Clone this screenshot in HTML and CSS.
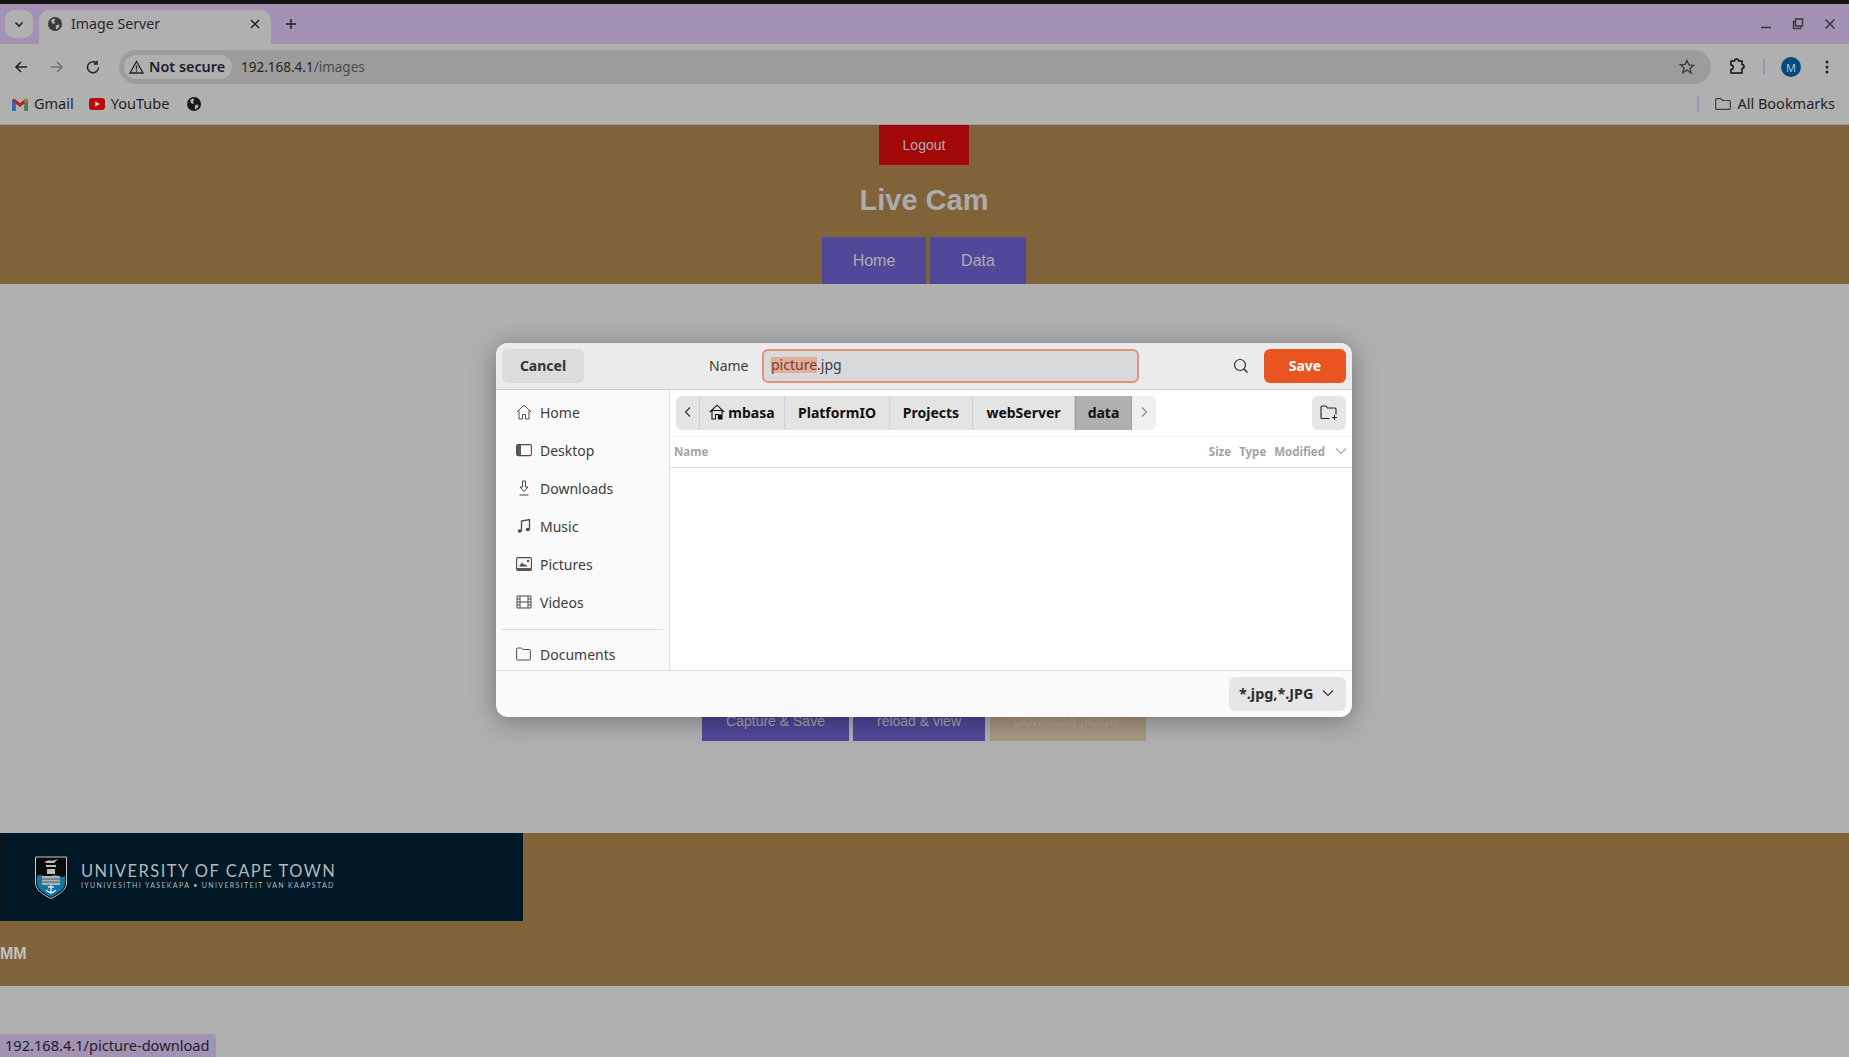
FILE: index.html
```html
<!DOCTYPE html>
<html lang="en">
<head>
<meta charset="utf-8">
<title>Image Server</title>
<link rel="stylesheet" href="styles.css">
</head>
<body>
<div class="chrome">
  <div class="tabstrip">
    <div class="tabsearch"><svg width="12" height="12" viewBox="0 0 12 12"><path d="M2.500 4.500 6 8l3.500-3.500" fill="none" stroke="#222" stroke-width="1.600"/></svg></div>
    <div class="tab">
      <svg class="tabglobe" width="14" height="14" viewBox="0 0 14 14"><circle cx="7" cy="7" r="7" fill="#3a3a3a"/><path d="M3 3l3-1.500 1.500 1L6 4.500l1 1.500-1 1-2-1zM8.500 8l3-.5-.5 3-2.500 2-1-2.500z" fill="#b0b0b0"/></svg>
      <span class="tabtitle">Image Server</span>
      <svg width="10" height="10" viewBox="0 0 10 10"><path d="M1 1l8 8M9 1l-8 8" stroke="#222" stroke-width="1.500"/></svg>
    </div>
    <svg class="newtab" width="12" height="12" viewBox="0 0 12 12"><path d="M6 1v10M1 6h10" stroke="#222" stroke-width="1.500"/></svg>
    <div class="winctl">
      <svg width="12" height="12" viewBox="0 0 12 12"><path d="M1 9.500h10" stroke="#3c3c3c" stroke-width="1.600"/></svg>
      <svg width="12" height="12" viewBox="0 0 12 12"><path d="M3.500 3.500H1.500v7h7v-2M3.500 1v7h7V1z" fill="none" stroke="#3c3c3c" stroke-width="1.500"/></svg>
      <svg width="12" height="12" viewBox="0 0 12 12"><path d="M1.500 1.500l9 9M10.500 1.500l-9 9" stroke="#3c3c3c" stroke-width="1.600"/></svg>
    </div>
  </div>
  <div class="toolbar">
    <svg class="navicon" width="14" height="14" viewBox="0 0 14 14"><path d="M13 7H2M7 2L2 7l5 5" fill="none" stroke="#222" stroke-width="1.500"/></svg>
    <svg class="navicon" width="14" height="14" viewBox="0 0 14 14"><path d="M1 7h11M7 2l5 5-5 5" fill="none" stroke="#717171" stroke-width="1.500"/></svg>
    <svg class="navicon" width="14" height="14" viewBox="0 0 14 14"><path d="M12.500 7.500A5.500 5.500 0 1 1 10.500 3M11 .8V4H7.800" fill="none" stroke="#222" stroke-width="1.500"/></svg>
    <div class="omnibox">
      <div class="chip">
        <svg width="15" height="14" viewBox="0 0 15 14"><path d="M7.500 1.500 14 13H1zM7.500 5.500v4M7.500 10.500v1.200" fill="none" stroke="#222" stroke-width="1.300"/></svg>
        <span>Not secure</span>
      </div>
      <span class="url">192.168.4.1<span class="urlpath">/images</span></span>
      <svg class="star" width="16" height="16" viewBox="0 0 16 16"><path d="M8 1.500l1.900 4.400 4.700.4-3.600 3.100 1.100 4.700L8 11.100l-4.100 2.500 1.100-4.700-3.600-3.100 4.700-.4z" fill="none" stroke="#3c3c3c" stroke-width="1.300"/></svg>
    </div>
    <svg class="ext" width="18" height="18" viewBox="0 0 18 18"><path d="M2 3h3.500a2 2 0 0 1 4 0H13v3.500a2 2 0 0 1 0 4V15H2v-3.500a2.200 2.200 0 0 0 0-4.500z" fill="none" stroke="#111" stroke-width="1.500"/></svg>
    <div class="vsep"></div>
    <div class="avatar">M</div>
    <svg class="dots" width="4" height="14" viewBox="0 0 4 14"><circle cx="2" cy="2" r="1.500" fill="#222"/><circle cx="2" cy="7" r="1.500" fill="#222"/><circle cx="2" cy="12" r="1.500" fill="#222"/></svg>
  </div>
  <div class="bookmarks">
    <svg width="16" height="13" viewBox="0 0 16 13"><path d="M0 2v11h3.500V5.500L8 9l4.500-3.500V13H16V2l-2-1.500L8 5 2 .5z" fill="#b3261e"/><path d="M0 2v11h3.500V5.500z" fill="#2b6cb0"/><path d="M12.500 5.500V13H16V2z" fill="#2e8b57"/><path d="M14 .5 16 2l-3.500 3.500V3z" fill="#b58a10"/></svg>
    <span class="bm">Gmail</span>
    <svg class="yt" width="16" height="12" viewBox="0 0 16 12"><rect width="16" height="12" rx="3" fill="#b50c0c"/><path d="M6.300 3.500v5l4.400-2.500z" fill="#d8d8d8"/></svg>
    <span class="bm">YouTube</span>
    <svg class="bmglobe" width="14" height="14" viewBox="0 0 14 14"><circle cx="7" cy="7" r="7" fill="#161616"/><path d="M3 3l3-1.500 1.500 1L6 4.500l1 1.500-1 1-2-1zM8.500 8l3-.5-.5 3-2.500 2-1-2.500z" fill="#b0b0b0"/></svg>
    <div class="bmspace"></div>
    <div class="vsep"></div>
    <svg class="bmfolder" width="16" height="12" viewBox="0 0 16 12"><path d="M.7 10.300V1.700q0-1 1-1H6l1.500 1.800h6.800q1 0 1 1v6.800q0 1-1 1H1.700q-1 0-1-1z" fill="none" stroke="#3c3c3c" stroke-width="1.200"/></svg>
    <span class="bm">All Bookmarks</span>
  </div>
</div>

<div class="page">
  <header class="site-head">
    <a class="btn logout">Logout</a>
    <h1>Live Cam</h1>
    <nav class="site-nav">
      <a class="btn nav home">Home</a>
      <a class="btn nav data">Data</a>
    </nav>
  </header>
  <main class="site-main">
    <div class="actions">
      <a class="btn act capture">Capture &amp; Save</a>
      <a class="btn act reload">reload &amp; view</a>
      <a class="btn act download">Download picture</a>
    </div>
  </main>
  <footer class="site-foot">
    <div class="uct">
      <svg class="crest" width="32" height="43" viewBox="0 0 32 43">
        <path d="M.5 1h31v26c0 7-8 12-15.500 15.500C8.500 39 .5 34 .5 27z" fill="#0b0b0b" stroke="#c9c9c9" stroke-width="1"/>
        <path d="M2 20q3.500-2 7 0t7 0 7 0 7 0v7c0 6-7 10.500-14 14C9 37.500 2 33 2 27z" fill="#0f76a5"/>
        <path d="M9 6q6-3 8-1l6-2-4 4h-7zM11 9h10v2H11zM12 13h8v5h-8z" fill="#bdbdbd"/>
        <rect x="7" y="20" width="18" height="9" fill="#a9b4b8"/>
        <path d="M7 23h18M7 26h18" stroke="#555" stroke-width="1"/>
        <path d="M16 29v9M11 34q5 5 10 0M13 31h6" fill="none" stroke="#e2e2e2" stroke-width="1.300"/>
      </svg>
      <div class="uct-text">
        <div class="uct-name">UNIVERSITY OF CAPE TOWN</div>
        <div class="uct-sub">IYUNIVESITHI YASEKAPA • UNIVERSITEIT VAN KAAPSTAD</div>
      </div>
    </div>
    <div class="mm">MM</div>
  </footer>
</div>

<div class="status">192.168.4.1/picture-download</div>

<div class="dialog">
  <div class="dlg-head">
    <button class="dbtn cancel">Cancel</button>
    <label class="name-label">Name</label>
    <div class="name-input"><span class="sel">picture</span>.jpg</div>
    <svg class="search" width="16" height="16" viewBox="0 0 16 16"><circle cx="7" cy="7" r="5.500" fill="none" stroke="#2e2e2e" stroke-width="1.200"/><path d="M11 11l3.500 3.500" stroke="#2e2e2e" stroke-width="1.500"/></svg>
    <button class="dbtn save">Save</button>
  </div>
  <div class="dlg-body">
    <aside class="places">
      <div class="place"><svg width="16" height="16" viewBox="0 0 16 16"><path d="M.8 8 8 1.200 15.200 8M3 6.500V15h3.500v-4.500h3V15H13V6.500" fill="none" stroke="#4a4a4a" stroke-width="1"/></svg>Home</div>
      <div class="place"><svg width="16" height="16" viewBox="0 0 16 16"><rect x=".6" y="2.600" width="14.800" height="11" rx="1.500" fill="none" stroke="#4a4a4a" stroke-width="1.100"/><path d="M1 3h4v10H1z" fill="#5a5a5a"/></svg>Desktop</div>
      <div class="place"><svg width="16" height="16" viewBox="0 0 16 16"><path d="M6.500 1h3v6h2.500L8 11.500 4 7h2.500zM3.500 15h9" fill="none" stroke="#4a4a4a" stroke-width="1"/></svg>Downloads</div>
      <div class="place"><svg width="16" height="16" viewBox="0 0 16 16"><path d="M5.500 13V3l8-1.500V11" fill="none" stroke="#4a4a4a" stroke-width="1.300"/><ellipse cx="3.700" cy="13" rx="2" ry="1.700" fill="#4a4a4a"/><ellipse cx="11.800" cy="11.500" rx="2" ry="1.700" fill="#4a4a4a"/></svg>Music</div>
      <div class="place"><svg width="16" height="16" viewBox="0 0 16 16"><rect x=".6" y="1.600" width="14.800" height="12.800" rx="1.500" fill="none" stroke="#4a4a4a" stroke-width="1.100"/><path d="M1 12h14v2.500H1z" fill="#5a5a5a"/><path d="M3 10.500l3-4 2.200 2.500 1-1 2.300 2.500z" fill="#4a4a4a"/><circle cx="12" cy="5" r="1.200" fill="#4a4a4a"/></svg>Pictures</div>
      <div class="place"><svg width="16" height="16" viewBox="0 0 16 16"><path d="M1 2h14v12H1zM4 2v12M12 2v12M1 5h3M1 8h14M1 11h3M12 5h3M12 11h3" fill="none" stroke="#4a4a4a" stroke-width="1"/></svg>Videos</div>
      <div class="place-sep"></div>
      <div class="place"><svg width="16" height="16" viewBox="0 0 16 16"><path d="M.6 3q0-1 1-1h4l1.300 1.500h6.500q1 0 1 1V13q0 1-1 1H1.600q-1 0-1-1z" fill="none" stroke="#4a4a4a" stroke-width="1"/></svg>Documents</div>
    </aside>
    <section class="files">
      <div class="pathrow">
        <div class="pathbar">
          <div class="seg arrow"><svg width="10" height="12" viewBox="0 0 10 12"><path d="M7 1.500 2.500 6 7 10.500" fill="none" stroke="#2e2e2e" stroke-width="1.100"/></svg></div>
          <div class="seg s-home"><svg width="16" height="16" viewBox="0 0 16 16"><path d="M.8 8 8 1.200 15.200 8M3 6.500V15h3.500v-4.500h3V15H13V6.500z" fill="none" stroke="#111" stroke-width="1.100"/><path d="M9.500 10.500h3.500V15H9.500z" fill="#111"/></svg>mbasa</div>
          <div class="seg s-plat">PlatformIO</div>
          <div class="seg s-proj">Projects</div>
          <div class="seg s-web">webServer</div>
          <div class="seg s-data">data</div>
          <div class="seg arrow next"><svg width="10" height="12" viewBox="0 0 10 12"><path d="M3 1.500 7.500 6 3 10.500" fill="none" stroke="#888" stroke-width="1.100"/></svg></div>
        </div>
        <div class="newfolder"><svg width="18" height="16" viewBox="0 0 18 16"><path d="M9.500 13.500H2q-1 0-1-1V2q0-1 1-1h4l1.500 2H15q1 0 1 1v5.500" fill="none" stroke="#222" stroke-width="1.100"/><path d="M12 12.500h5M14.500 10v5" stroke="#222" stroke-width="1"/></svg></div>
      </div>
      <div class="cols">
        <span class="col-name">Name</span>
        <span>Size</span>
        <span>Type</span>
        <span>Modified</span>
        <svg width="12" height="8" viewBox="0 0 12 8"><path d="M1 1.500l5 5 5-5" fill="none" stroke="#a8a8a8" stroke-width="1.100"/></svg>
      </div>
      <div class="filelist"></div>
    </section>
  </div>
  <div class="dlg-foot">
    <div class="filter">*.jpg,*.JPG<svg width="12" height="8" viewBox="0 0 12 8"><path d="M1 1.500l5 5 5-5" fill="none" stroke="#2e2e2e" stroke-width="1.100"/></svg></div>
  </div>
</div>
</body>
</html>
```

FILE: styles.css
```css
* { box-sizing: border-box; }
html, body { margin: 0; height: 100%; overflow: hidden; }
body {
  position: relative;
  background: #b0b0b0;
  font-family: "Noto Sans", "Open Sans", sans-serif;
  color: #1c1c1c;
}

/* browser chrome */
.chrome { background: #b0b0b0; border-bottom: 1px solid #9a9a9a; height: 125px; border-top: 4px solid #141414; }
.tabstrip { display: flex; align-items: center; height: 40px; background: #a392b3; padding: 6px 0 0 5px; position: relative; }
.tabsearch { width: 28px; height: 28px; border-radius: 9px; background: #b0b0b0; display: flex; align-items: center; justify-content: center; margin-top: -6px; }
.tab { width: 232px; height: 34px; margin-left: 6px; background: #b0b0b0; border-radius: 10px 10px 0 0; display: flex; align-items: center; padding: 0 11px 7px 9px; align-self: flex-end; }
.tabtitle { flex: 1; margin-left: 9px; font-size: 14.200px; color: #2a2a2a; }
.newtab { margin: -6px 0 0 14px; }
.winctl { margin-left: auto; margin-top: -6px; display: flex; gap: 20px; padding-right: 13px; }
.toolbar { display: flex; align-items: center; height: 40px; padding: 6px 20px 0 14px; }
.navicon { margin-right: 22px; }
.navicon:nth-child(3) { margin-right: 19px; }
.omnibox { flex: 1; height: 34px; border-radius: 17px; background: #9c9c9c; display: flex; align-items: center; padding: 0 5px; }
.chip { display: flex; align-items: center; gap: 5px; height: 24px; width: 108px; padding: 0 0 1px 5px; border-radius: 12px; background: #b0b0b0; font-size: 14.400px; font-weight: 600; color: #1c1c2c; white-space: nowrap; }
.url { margin-left: 9px; font-size: 13.500px; color: #242424; }
.urlpath { color: #4a4a4a; }
.star { margin-left: auto; margin-right: 11px; }
.ext { margin-left: 18px; }
.vsep { width: 2px; height: 16px; background: #a392b3; }
.toolbar .vsep { margin-left: 16px; }
.avatar { width: 20px; height: 20px; margin-left: 16px; border-radius: 50%; background: #004a80; color: #b4c0d0; font-size: 11px; display: flex; align-items: center; justify-content: center; }
.dots { margin-left: 24px; }
.bookmarks { display: flex; align-items: center; height: 40px; padding: 0 14px 0 12px; }
.bm { font-size: 14.500px; color: #242424; margin-left: 6px; padding-bottom: 2px; white-space: nowrap; }
.yt { margin-left: 15px; }
.bmglobe { margin-left: 18px; }
.bmspace { flex: 1; }
.bookmarks .vsep { margin-right: 16px; }

/* the page behind the dialog */
.site-head { background: #806339; height: 159px; padding-right: 1px; display: flex; flex-direction: column; align-items: center; }
.btn { display: flex; align-items: center; justify-content: center; font-family: "Liberation Sans", Arial, sans-serif; font-size: 15px; color: #b0acb0; }
.logout { width: 90px; height: 40px; background: #a30808; font-size: 14px; }
.site-head h1 { margin: 17px 0 0; height: 55px; font: bold 29px/36px "Liberation Sans", Arial, sans-serif; color: #acacac; }
.site-nav { display: flex; gap: 4px; height: 47px; }
.nav { background: #51489a; font-size: 16px; }
.home { width: 104px; }
.data { width: 96px; }
.site-main { height: 549px; padding-top: 417px; }
.actions { display: flex; justify-content: center; gap: 4px; height: 40px; padding-right: 1px; }
.act { background: #51489a; font-size: 14px; color: #aaa8ae; }
.capture { width: 147px; }
.reload { width: 132px; }
.download { width: 156px; margin-left: 1px; background: #a99880; color: #b3a690; }
.site-foot { background: #806339; height: 153px; }
.uct { width: 523px; height: 88px; background: #011826; border-left: 2px solid #12121a; display: flex; align-items: center; padding-left: 33px; }
.crest { flex: none; }
.uct-text { margin: -4px 0 0 14px; font-family: Lato, "Noto Sans", sans-serif; color: #b4b8bb; white-space: nowrap; }
.uct-name { font-size: 16.500px; line-height: 20px; letter-spacing: 1.480px; }
.uct-sub { font-size: 7px; line-height: 9px; letter-spacing: 1.360px; }
.mm { margin-top: 24px; font: bold 16px/18px "Liberation Sans", Arial, sans-serif; color: #c2c2c2; }

.status { position: absolute; left: 0; bottom: 0; height: 23px; width: 216px; padding-left: 5px; background: #a392b3; border-radius: 0 4px 0 0; font-size: 14.600px; line-height: 22px; color: #1e1e2a; white-space: nowrap; }

/* GTK file dialog */
.dialog { position: absolute; left: 496px; top: 343px; width: 856px; height: 374px; border-radius: 12px; background: #fafafa; box-shadow: 0 4px 26px rgba(0,0,0,.35); display: flex; flex-direction: column; overflow: hidden; font-size: 14px; color: #3d3d3d; }
.dlg-head { flex: none; height: 47px; background: #ebebeb; border-bottom: 1px solid #cfcfcf; display: flex; align-items: center; padding: 0 6px; }
.dbtn { border: 0; border-radius: 6px; height: 34px; width: 82px; font-family: inherit; font-size: 14px; font-weight: 700; padding: 0 0 2px; }
.cancel { background: #dcdcdc; color: #333; }
.save { background: #e95420; color: #fff; }
.name-label { margin: -1px 0 0 125px; width: 53px; color: #3d3d3d; }
.name-input { width: 377px; height: 34px; border: 2px solid #e59078; border-radius: 6px; background: #d9d9d9; padding-left: 7px; line-height: 27px; color: #3d3d3d; }
.sel { background: #e0ad9d; color: #79402e; display: inline-block; height: 16px; line-height: 15px; }
.search { margin-left: 94px; margin-right: 15px; }
.dlg-body { flex: 1; display: flex; min-height: 0; }
.places { flex: none; width: 174px; border-right: 1px solid #dcdcdc; padding: 3px 6px 0; overflow: hidden; }
.place { display: flex; align-items: center; height: 38px; gap: 8px; padding-left: 14px; }
.place-sep { height: 1px; background: #dcdcdc; margin: 8px 0 5px; }
.files { flex: 1; background: #fff; display: flex; flex-direction: column; min-width: 0; }
.pathrow { flex: none; height: 47px; display: flex; align-items: center; justify-content: space-between; padding: 0 6px 0 6px; border-bottom: 1px solid #f2f2f2; }
.pathbar { display: flex; height: 34px; border-radius: 6px; overflow: hidden; background: #e4e4e4; font-weight: 700; color: #111; font-size: 14px; }
.seg { display: flex; align-items: center; justify-content: center; gap: 3px; border-right: 1px solid #cfcfcf; padding-bottom: 2px; }
.arrow { width: 24px; }
.next { background: #f0f0f0; border: 0; }
.s-home { width: 85px; }
.s-plat { width: 105px; }
.s-proj { width: 83px; }
.s-web { width: 102px; }
.s-data { width: 57px; background: #b0b0b0; border: 0; border-left: 1px solid #999; border-right: 1px solid #a0a0a0; }
.newfolder { width: 34px; height: 34px; border-radius: 6px; background: #e6e6e6; display: flex; align-items: center; justify-content: center; }
.cols { flex: none; height: 31px; display: flex; align-items: center; gap: 8px; padding: 0 5px 2px 4px; border-bottom: 1px solid #dcdcdc; font-size: 11.500px; font-weight: 700; color: #a3a3a3; }
.cols svg { margin-left: 2px; }
.col-name { margin-right: auto; }
.filelist { flex: 1; }
.dlg-foot { flex: none; height: 47px; border-top: 1px solid #dcdcdc; display: flex; align-items: center; justify-content: flex-end; padding-right: 6px; }
.filter { width: 117px; height: 34px; border-radius: 6px; background: #e6e6e6; display: flex; align-items: center; justify-content: space-between; padding: 0 12px 2px 10px; font-weight: 700; font-size: 14.400px; color: #2e2e2e; white-space: nowrap; }
```
